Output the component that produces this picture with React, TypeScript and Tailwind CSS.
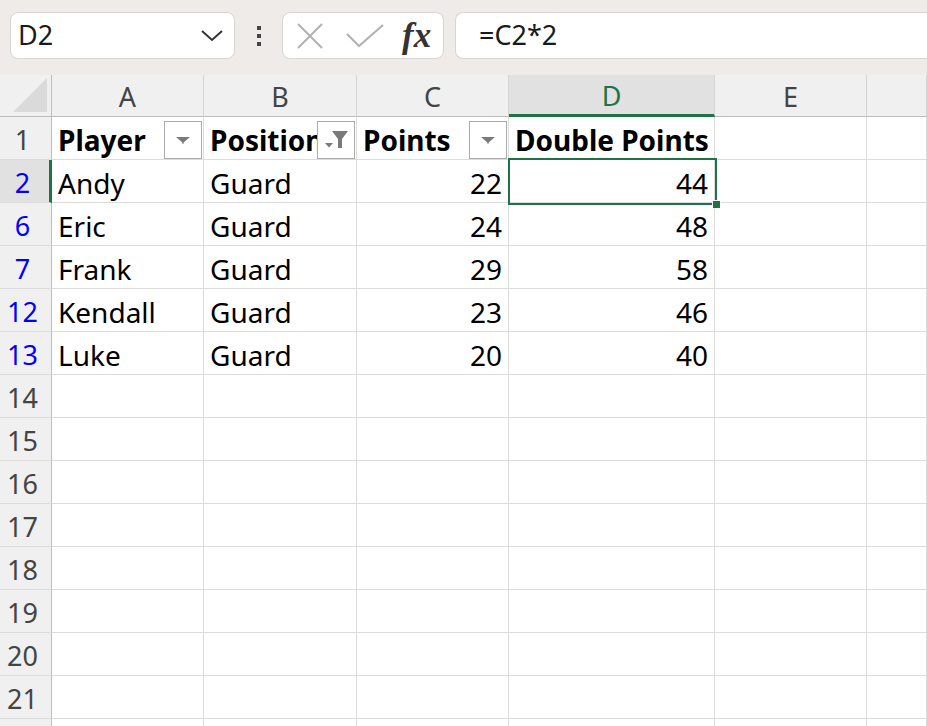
import React from 'react';

const font = { fontFamily: '"Noto Sans", "Open Sans", Arial, sans-serif' };

const cols = ['A', 'B', 'C', 'D', 'E', ''];

const rows: { n: string; blue?: boolean; cells: (string | number)[] }[] = [
  { n: '2', blue: true, cells: ['Andy', 'Guard', 22, 44] },
  { n: '6', blue: true, cells: ['Eric', 'Guard', 24, 48] },
  { n: '7', blue: true, cells: ['Frank', 'Guard', 29, 58] },
  { n: '12', blue: true, cells: ['Kendall', 'Guard', 23, 46] },
  { n: '13', blue: true, cells: ['Luke', 'Guard', 20, 40] },
  ...['14', '15', '16', '17', '18', '19', '20', '21', ''].map((n) => ({ n, cells: [] as (string | number)[] })),
];

function FilterButton({ active }: { active?: boolean }) {
  return (
    <div className="absolute right-[1px] top-[4px] flex h-[38px] w-[38px] items-center justify-center border border-[#ababab] bg-white">
      {active ? (
        <svg width="28" height="22" viewBox="0 0 28 22">
          <path d="M10 2 H26 L20 10 V19 H16 V10 Z" fill="#7a7a7a" />
          <path d="M3 14 H11 L7 18.5 Z" fill="#7a7a7a" />
        </svg>
      ) : (
        <svg width="16" height="10" viewBox="0 0 16 10">
          <path d="M1 2 H15 L8 8 Z" fill="#7a7a7a" />
          <rect x="7.5" y="7" width="1" height="2" fill="#7a7a7a" />
        </svg>
      )}
    </div>
  );
}

export default function App() {
  return (
    <div className="h-[726px] w-[927px] overflow-hidden bg-white" style={font}>
      {/* formula bar strip */}
      <div className="flex h-[75px] items-start bg-[#eeebe8] pt-[12px] pl-[10px]">
        <div className="flex h-[47px] w-[225px] items-center justify-between rounded-[8px] border border-[#d8d5d2] bg-white pl-[7px] pr-[10px]">
          <span className="text-[27px] text-[#1a1a1a]">D2</span>
          <svg width="24" height="14" viewBox="0 0 24 14">
            <path d="M2 2 L12 11 L22 2" fill="none" stroke="#333" strokeWidth="2" />
          </svg>
        </div>
        <div className="flex h-[47px] w-[47px] flex-col items-center justify-center gap-[4px]">
          <div className="h-[4px] w-[4px] bg-[#444]" />
          <div className="h-[4px] w-[4px] bg-[#444]" />
          <div className="h-[4px] w-[4px] bg-[#444]" />
        </div>
        <div className="flex h-[47px] w-[162px] items-center rounded-[8px] border border-[#d8d5d2] bg-white pl-[13px]">
          <svg width="28" height="28" viewBox="0 0 28 28">
            <path d="M2 2 L26 26 M26 2 L2 26" stroke="#b3b3b3" strokeWidth="2.2" fill="none" />
          </svg>
          <svg className="ml-[22px]" width="38" height="24" viewBox="0 0 38 24">
            <path d="M1 10 L13 22 L37 1" stroke="#b3b3b3" strokeWidth="2.2" fill="none" />
          </svg>
          <span
            className="ml-[18px] text-[35px] font-bold italic leading-none text-[#333]"
            style={{ fontFamily: '"Liberation Serif", "DejaVu Serif", serif' }}
          >
            fx
          </span>
        </div>
        <div className="ml-[11px] flex h-[47px] flex-1 items-center rounded-l-[8px] border border-r-0 border-[#d8d5d2] bg-white pl-[23px]">
          <span className="text-[27px] text-[#1a1a1a]">=C2*2</span>
        </div>
      </div>

      {/* grid */}
      <div className="relative">
        <div className="grid grid-cols-[52px_152px_153px_152px_206px_152px_1fr]">
          {/* column header row */}
          <div className="relative h-[42px] border-r border-b border-[#bdbdbd] bg-[#f0f0f0]">
            <svg className="absolute right-[4px] bottom-[4px]" width="34" height="34" viewBox="0 0 34 34">
              <path d="M34 0 L34 34 L0 34 Z" fill="#dadada" />
            </svg>
          </div>
          {cols.map((c, i) => (
            <div
              key={i}
              className={
                c === 'D'
                  ? 'flex h-[42px] items-center justify-center border-r border-r-[#d4d4d4] border-b-[3px] border-b-[#217346] bg-[#e1e1e1] pt-[3px] text-[27px] text-[#217346]'
                  : 'flex h-[42px] items-center justify-center border-r border-b border-r-[#d4d4d4] border-b-[#bdbdbd] bg-[#f0f0f0] pt-[3px] text-[27px] text-[#444]'
              }
            >
              {c}
            </div>
          ))}

          {/* header row 1 */}
          <div className="flex h-[43px] items-center justify-center border-r border-b border-r-[#bdbdbd] border-b-[#dcdcdc] bg-[#f0f0f0] pt-[4px] pr-[6px] text-[27px] text-[#444]">
            1
          </div>
          {['Player', 'Position', 'Points', 'Double Points', '', ''].map((h, i) => (
            <div
              key={i}
              className="relative flex h-[43px] items-center overflow-hidden border-r border-b border-[#dcdcdc] pt-[4px] pl-[6px] text-[28px] font-bold whitespace-nowrap text-black"
            >
              {h}
              {i === 0 && <FilterButton />}
              {i === 1 && <FilterButton active />}
              {i === 2 && <FilterButton />}
            </div>
          ))}

          {rows.map((r, ri) => (
            <React.Fragment key={ri}>
              <div
                className={
                  r.n === '2'
                    ? 'flex h-[43px] items-center justify-center border-r-[3px] border-b border-r-[#217346] border-b-[#dcdcdc] bg-[#e1e1e1] pt-[4px] pr-[4px] text-[27px] text-[#0000ff]'
                    : `flex h-[43px] items-center justify-center border-r border-b border-r-[#bdbdbd] border-b-[#dcdcdc] bg-[#f0f0f0] pt-[4px] pr-[6px] text-[27px] ${
                        r.blue ? 'text-[#0000ff]' : 'text-[#444]'
                      }`
                }
              >
                {r.n}
              </div>
              {[0, 1, 2, 3, 4, 5].map((ci) => {
                const v = r.cells[ci];
                const num = typeof v === 'number';
                return (
                  <div
                    key={ci}
                    className={`flex h-[43px] items-center border-r border-b border-[#dcdcdc] px-[6px] pt-[4px] text-[28px] whitespace-nowrap text-black ${
                      num ? 'justify-end' : 'justify-start'
                    }`}
                  >
                    {v}
                  </div>
                );
              })}
            </React.Fragment>
          ))}
        </div>

        {/* active cell selection on D2 */}
        <div className="pointer-events-none absolute top-[83px] left-[508px] h-[47px] w-[209px] border-2 border-[#217346]" />
        <div className="pointer-events-none absolute top-[125px] left-[712px] h-[9px] w-[9px] border border-white bg-[#217346]" />
      </div>
    </div>
  );
}
